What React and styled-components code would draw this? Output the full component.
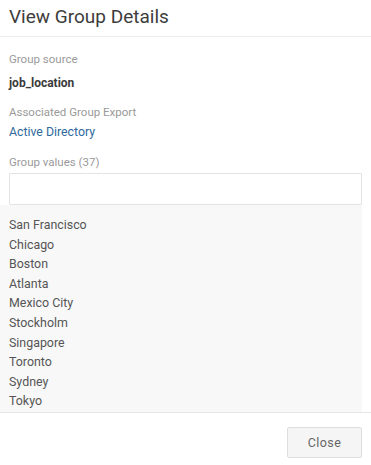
import React from "react";
import styled, { createGlobalStyle } from "styled-components";

const GlobalStyle = createGlobalStyle`
    html, body {
        margin: 0;
        padding: 0;
        background: #fff;
    }
    body {
        font-family: Roboto, "Liberation Sans", Arial, sans-serif;
    }
`;

const cities = [
    "San Francisco",
    "Chicago",
    "Boston",
    "Atlanta",
    "Mexico City",
    "Stockholm",
    "Singapore",
    "Toronto",
    "Sydney",
    "Tokyo",
];

const App = () => {
    return (
        <>
            <GlobalStyle />
            <Modal>
                <Header>
                    <Title>View Group Details</Title>
                </Header>
                <Body>
                    <Label>Group source</Label>
                    <Value>job_location</Value>
                    <Label $top={13}>Associated Group Export</Label>
                    <Link href="#">Active Directory</Link>
                    <Label $top={14}>Group values (37)</Label>
                    <Search type="text" />
                    <List>
                        {cities.map((city) => (
                            <Item key={city}>{city}</Item>
                        ))}
                    </List>
                </Body>
                <Footer>
                    <Button>Close</Button>
                </Footer>
            </Modal>
        </>
    );
};

const Modal = styled.div`
    height: 465px;
    display: flex;
    flex-direction: column;
    background: #fff;
    overflow: hidden;
`;

const Header = styled.header`
    height: 37px;
    border-bottom: 1px solid #ececec;
    padding: 5px 9px 0;
    box-sizing: border-box;
    flex-shrink: 0;
`;

const Title = styled.h1`
    margin: 0;
    font-size: 19px;
    line-height: 24px;
    font-weight: 400;
    color: #3d3d3d;
`;

const Body = styled.div`
    flex: 1;
    min-height: 0;
    overflow: hidden;
    padding: 14px 9px 0;
    display: flex;
    flex-direction: column;
`;

const Label = styled.div`
    margin-top: ${(p) => p.$top || 0}px;
    font-size: 11.5px;
    line-height: 16px;
    color: #9a9a9a;
`;

const Value = styled.div`
    margin-top: 8px;
    font-size: 12px;
    line-height: 16px;
    font-weight: 700;
    color: #3a3a3a;
`;

const Link = styled.a`
    margin-top: 4px;
    font-size: 12.3px;
    line-height: 16px;
    color: #2e6aa0;
    text-decoration: none;
`;

const Search = styled.input`
    margin-top: 3px;
    height: 32px;
    box-sizing: border-box;
    border: 1px solid #e3e3e3;
    border-radius: 1px;
    background: #fff;
    outline: none;
    flex-shrink: 0;
`;

const List = styled.ul`
    list-style: none;
    margin: 0 0 0 -9px;
    padding: 10px 0 0 9px;
    background: #f8f8f8;
    flex: 1;
`;

const Item = styled.li`
    font-size: 12.4px;
    line-height: 19.6px;
    color: #555;
`;

const Footer = styled.footer`
    height: 53px;
    flex-shrink: 0;
    border-top: 1px solid #e6e6e6;
    box-sizing: border-box;
    display: flex;
    justify-content: flex-end;
    align-items: flex-start;
    padding: 14px 9px 0;
`;

const Button = styled.button`
    width: 75px;
    height: 31px;
    background: #f5f5f5;
    border: 1px solid #dedede;
    border-radius: 2px;
    font-family: Roboto, "Liberation Sans", Arial, sans-serif;
    font-size: 12.5px;
    font-weight: 400;
    color: #666;
    letter-spacing: 0.4px;
    cursor: pointer;
`;

export default App;
